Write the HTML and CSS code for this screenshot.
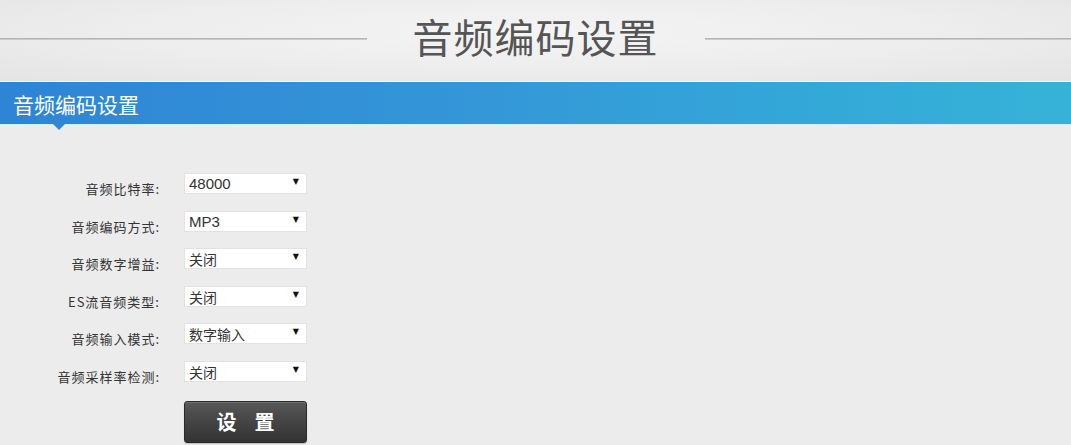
FILE: index.html
```html
<!DOCTYPE html>
<html lang="zh-CN">
<head>
<meta charset="utf-8">
<title>音频编码设置</title>
<link rel="stylesheet" href="styles.css">
</head>
<body>
<header class="page-head">
  <span class="head-line"></span>
  <h1 class="head-title">音频编码设置</h1>
  <span class="head-line"></span>
</header>
<div class="section-bar">
  <h2 class="section-title">音频编码设置</h2>
</div>
<form class="form">
  <label class="f-label">音频比特率:</label>
  <div class="f-select"><span class="f-value latin">48000</span><span class="f-arrow">▼</span></div>
  <label class="f-label">音频编码方式:</label>
  <div class="f-select"><span class="f-value latin">MP3</span><span class="f-arrow">▼</span></div>
  <label class="f-label">音频数字增益:</label>
  <div class="f-select"><span class="f-value">关闭</span><span class="f-arrow">▼</span></div>
  <label class="f-label">ES流音频类型:</label>
  <div class="f-select"><span class="f-value">关闭</span><span class="f-arrow">▼</span></div>
  <label class="f-label">音频输入模式:</label>
  <div class="f-select"><span class="f-value">数字输入</span><span class="f-arrow">▼</span></div>
  <label class="f-label">音频采样率检测:</label>
  <div class="f-select"><span class="f-value">关闭</span><span class="f-arrow">▼</span></div>
  <span class="f-spacer"></span>
  <button type="button" class="f-button">设置</button>
</form>
</body>
</html>
```
FILE: styles.css
```css
html, body {
  margin: 0;
  padding: 0;
}
body {
  background: #ececec;
  font-family: "Noto Sans CJK SC", "Noto Sans", sans-serif;
  color: #333;
  width: 1071px;
  height: 445px;
  overflow: hidden;
}
.page-head {
  height: 81px;
  box-sizing: border-box;
  padding-bottom: 4px;
  display: flex;
  align-items: center;
  background: radial-gradient(ellipse at 50% 40%, #f4f4f4 0%, #ededed 55%, #e4e4e4 100%);
}
.head-line {
  flex: 1;
  height: 2px;
  background: linear-gradient(#a9a9a9, #d6d6d6);
}
.head-title {
  margin: -5px 46px 0;
  font-size: 40px;
  font-weight: 400;
  line-height: 48px;
  color: #555;
  letter-spacing: 1px;
}
.section-bar {
  position: relative;
  height: 42px;
  border-top: 1px solid #f7fbfd;
  border-bottom: 1px solid #d4eef6;
  background: linear-gradient(to right, #2f84d5 0%, #3497d8 45%, #33a8d8 75%, #36b2d8 100%);
}
.section-bar::after {
  content: "";
  position: absolute;
  left: 53px;
  top: 42px;
  border-left: 6px solid transparent;
  border-right: 6px solid transparent;
  border-top: 6px solid #3087d5;
}
.section-title {
  margin: 0;
  padding: 3px 0 0 13px;
  font-size: 21px;
  font-weight: 400;
  line-height: 39px;
  color: #fff;
}
.form {
  margin-top: 48px;
  display: grid;
  grid-template-columns: 160px 123px;
  column-gap: 24px;
  row-gap: 16.6px;
}
.f-label {
  text-align: right;
  font-size: 13px;
  letter-spacing: 1px;
  line-height: 20px;
  padding-top: 6px;
  height: 21px;
  box-sizing: border-box;
  color: #333;
  white-space: nowrap;
}
.f-select {
  height: 21px;
  box-sizing: border-box;
  border: 1px solid #e2e2e2;
  background: #fff;
  display: flex;
  align-items: center;
  justify-content: space-between;
  padding: 0 7px 0 4px;
}
.f-value {
  font-size: 14px;
  line-height: 19px;
  color: #333;
  padding-top: 2px;
}
.f-value.latin {
  font-family: "Liberation Sans", Arial, sans-serif;
  font-size: 15px;
  padding-top: 0;
}
.f-arrow {
  font-family: "DejaVu Sans", sans-serif;
  font-size: 8px;
  color: #111;
  line-height: 10px;
  margin-top: -3px;
}
.f-button {
  margin-top: 2px;
  width: 123px;
  height: 42px;
  border: 1px solid #2a2a2a;
  border-radius: 3px;
  background: linear-gradient(#585858 0%, #444 50%, #333 100%);
  box-shadow: inset 0 1px 0 rgba(255,255,255,0.15), 0 1px 1px rgba(0,0,0,0.2);
  color: #fff;
  font-family: "Noto Sans CJK SC", sans-serif;
  font-size: 20px;
  font-weight: 700;
  letter-spacing: 18px;
  padding: 0 0 0 18px;
  line-height: 40px;
}
```
